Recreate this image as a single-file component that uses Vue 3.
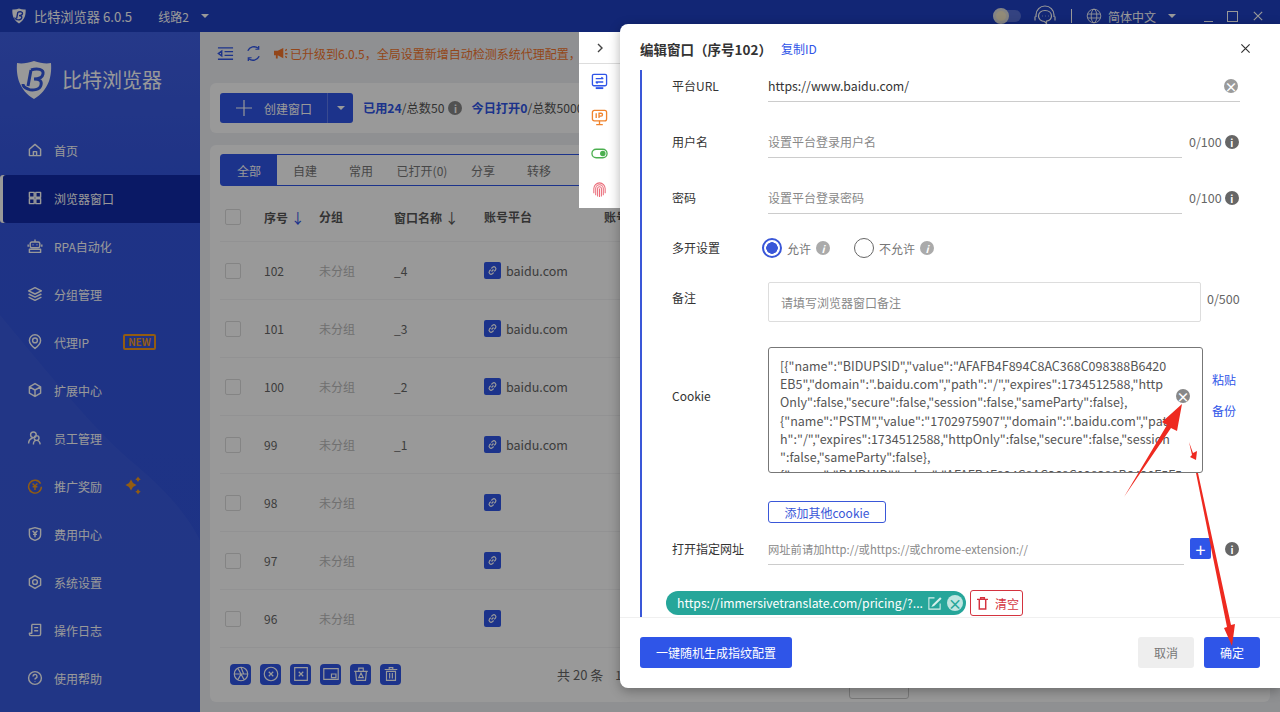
<script setup>
const menu = [
  { label: '首页', icon: 'M3 9l7-6 7 6v8H3zM8 17v-5h4v5' },
  { label: '浏览器窗口', active: true, icon: 'M3 3h6v6H3zM11 3h6v6h-6zM3 11h6v6H3zM11 11h6v6h-6z' },
  { label: 'RPA自动化', icon: 'M6 5h8a2 2 0 0 1 2 2v3a2 2 0 0 1-2 2H6a2 2 0 0 1-2-2V7a2 2 0 0 1 2-2zM10 2v3M7 8.500h1M12 8.500h1M1.500 8v3M18.500 8v3M3 14h14v4H3z' },
  { label: '分组管理', icon: 'M10 2l8 4-8 4-8-4zM2 10l8 4 8-4M2 14l8 4 8-4' },
  { label: '代理IP', icon: 'M10 18s-7-5.500-7-10a7 7 0 0 1 14 0c0 4.500-7 10-7 10zM10 5a3 3 0 1 0 0 6 3 3 0 0 0 0-6z', tag: 'new' },
  { label: '扩展中心', icon: 'M10 2l7 4v8l-7 4-7-4V6zM3 6l7 4 7-4M10 10v8' },
  { label: '员工管理', icon: 'M8 2.500a3.500 3.500 0 1 0 0 7 3.500 3.500 0 0 0 0-7zM2 17c0-4 2-6 5-7M12 7a3 3 0 1 1 0 6 3 3 0 0 1 0-6zM8 18c0-3 1.500-5 4-5s4 2 4.500 5' },
  { label: '推广奖励', icon: 'M17 7a8 8 0 1 0 1 4M7 7l3 3 3-3M10 10v5M7 11h6', orange: true, tag: 'star' },
  { label: '费用中心', icon: 'M10 2l7 2v7c0 4-3 6-7 7-4-1-7-3-7-7V4zM7 6l3 3 3-3M10 9v5M7.500 10.500h5' },
  { label: '系统设置', icon: 'M10 2l7 4v8l-7 4-7-4V6zM10 7a3 3 0 1 0 0 6 3 3 0 0 0 0-6z' },
  { label: '操作日志', icon: 'M6 3h11v12a2 2 0 0 1-2 2H4M6 3v11H3v1a2 2 0 0 0 2 2M9 7h5M9 11h5' },
  { label: '使用帮助', icon: 'M10 2a8 8 0 1 0 0 16 8 8 0 0 0 0-16zM7.500 8a2.500 2.500 0 1 1 3.500 2.300c-.7.3-1 .9-1 1.700M10 14.500v.5' },
]
const tabs = ['全部', '自建', '常用', '已打开(0)', '分享', '转移']
const rows = [
  { id: 102, name: '_4', site: 'baidu.com' },
  { id: 101, name: '_3', site: 'baidu.com' },
  { id: 100, name: '_2', site: 'baidu.com' },
  { id: 99, name: '_1', site: 'baidu.com' },
  { id: 98, name: '', site: '' },
  { id: 97, name: '', site: '' },
  { id: 96, name: '', site: '' },
]
const tools = [
  'M10 2.500a7.500 7.500 0 1 0 0 15 7.500 7.500 0 0 0 0-15zM10 2.500l3 7.500M17.500 10H10M13.500 16.500L10 10M6.500 16.500L10 10M2.500 10H10M6.500 3.500L10 10',
  'M10 2.500a7.500 7.500 0 1 0 0 15 7.500 7.500 0 0 0 0-15zM7.500 7.500l5 5M12.500 7.500l-5 5',
  'M3 3h14v14H3zM7.500 7.500l5 5M12.500 7.500l-5 5',
  'M2 4h16v12H2zM10.500 10h5v4h-5z',
  'M4 7h12l-1 10H5zM2.500 7h15M7.500 7V3.500h5V7M10 9l2.500 5h-5z',
  'M5 7h10v10H5zM3 5h14M8 5V3h4v2M8.500 9v6M11.500 9v6',
]
const cookieLines = [
  '[{"name":"BIDUPSID","value":"AFAFB4F894C8AC368C098388B6420',
  'EB5","domain":".baidu.com","path":"/","expires":1734512588,"http',
  'Only":false,"secure":false,"session":false,"sameParty":false},',
  '{"name":"PSTM","value":"1702975907","domain":".baidu.com","pat',
  'h":"/","expires":1734512588,"httpOnly":false,"secure":false,"session',
  '":false,"sameParty":false},',
  '{"name":"BAIDUID","value":"AFAFB4F894C8AC368C098388B6420F5F5',
]
</script>

<template>
  <div class="app">
    <header class="titlebar">
      <svg class="title-logo" viewBox="0 0 36 40">
        <path d="M18 1c6 2 12 3 17 2 1 13-2 27-17 36C3 30 0 16 1 3c5 1 11 0 17-2z" fill="#fff" />
        <path d="M15 10l-3 16M15 10c6-2 13-1 12 4-.5 3-4 5-9 5 6 0 8 2 7 6-1 5-9 6-13 4-3-1-5-3-5-5" fill="none" stroke="#2242c8" stroke-width="3.500" />
      </svg>
      <span class="title-name">比特浏览器 6.0.5</span>
      <span class="title-line">线路2</span>
      <i class="caret" />
      <div class="title-right">
        <div class="theme-toggle"><span class="theme-knob" /></div>
        <svg class="title-icon headset" viewBox="0 0 24 24" fill="none" stroke="currentColor" stroke-width="1.200">
          <path d="M3 13V11a9 9 0 0 1 18 0v2M2 12.500v4M22 12.500v4" />
          <path d="M12 6.500c-4 0-6.500 2.500-6.500 5.500 0 3 2.500 5.500 6 5.500l2 2v-2.300c3-.7 5-2.700 5-5.200 0-3-2.500-5.500-6.500-5.500z" />
          <path d="M9 12h.5M12 12h.5M15 12h.5" />
        </svg>
        <span class="title-sep" />
        <svg class="title-icon globe" viewBox="0 0 20 20" fill="none" stroke="currentColor" stroke-width="1.100">
          <circle cx="10" cy="10" r="8.500" />
          <ellipse cx="10" cy="10" rx="3.500" ry="8.500" />
          <path d="M2 7.500h16M2 12.500h16" />
        </svg>
        <span class="title-lang">简体中文</span>
        <i class="caret lang-caret" />
        <span class="win-min" />
        <span class="win-max" />
        <svg class="win-close" viewBox="0 0 12 12" stroke="currentColor" stroke-width="1.400"><path d="M1 1l10 10M11 1L1 11" /></svg>
      </div>
    </header>

    <div class="body">
      <aside class="sidebar">
        <svg class="side-wave" viewBox="0 0 200 680" preserveAspectRatio="none">
          <path d="M0 283c50 60 90 110 130 145 30 25 55 50 70 80V680H0z" fill="#fff" opacity=".035" />
        </svg>
        <div class="brand">
          <svg class="brand-logo" viewBox="0 0 36 40">
            <path d="M18 1c6 2 12 3 17 2 1 13-2 27-17 36C3 30 0 16 1 3c5 1 11 0 17-2z" fill="#fff" />
            <path d="M15 10l-3 16M15 10c6-2 13-1 12 4-.5 3-4 5-9 5 6 0 8 2 7 6-1 5-9 6-13 4-3-1-5-3-5-5" fill="none" stroke="#3357e0" stroke-width="3" />
          </svg>
          <span class="brand-name">比特浏览器</span>
        </div>
        <nav class="menu">
          <div v-for="item in menu" :key="item.label" class="menu-item" :class="{ active: item.active }">
            <svg class="menu-icon" :class="{ orange: item.orange }" viewBox="0 0 20 20" fill="none" stroke="currentColor" stroke-width="1.800" stroke-linejoin="round">
              <path :d="item.icon" />
            </svg>
            <span>{{ item.label }}</span>
            <span v-if="item.tag === 'new'" class="tag-new">NEW</span>
            <svg v-if="item.tag === 'star'" class="tag-star" viewBox="0 0 20 20" fill="#f59a1d">
              <path d="M8 3.500L10 7l3.500 2-3.500 2-2 3.500L6 11 2.500 9 6 7z" />
              <path d="M15 .500l1 1.700 1.700 1-1.700 1-1 1.700-1-1.700-1.700-1 1.700-1zM15 13l1 1.700 1.700 1-1.700 1-1 1.700-1-1.700-1.700-1 1.700-1z" />
            </svg>
          </div>
        </nav>
      </aside>

      <main class="main">
        <div class="notice">
          <svg class="notice-icon" viewBox="0 0 18 18" fill="none" stroke="#2f55e8" stroke-width="1.500">
            <path d="M1 3h16M8 7h9M8 11h9M1 15h16M5 6.500L1.500 9 5 11.500z" />
          </svg>
          <svg class="notice-icon refresh" viewBox="0 0 18 18" fill="none" stroke="#2f55e8" stroke-width="1.500">
            <path d="M3 6a7 7 0 0 1 11-2.500M15 12a7 7 0 0 1-11 2.500" />
            <path d="M14.500 1v3.500H11M3.500 17v-3.500H7" stroke-width="1.300" />
          </svg>
          <svg class="horn" viewBox="0 0 16 14" fill="#f5762c">
            <path d="M1 4h4l6-3v11L5 9v3.500H3V9H1zM13 3l2-1v1.500l-2 1zM13 6.500h2.500V8H13zM13 9.500l2 1V12l-2-1z" />
          </svg>
          <span class="notice-text">已升级到6.0.5，全局设置新增自动检测系统代理配置，</span>
        </div>

        <section class="card toolbar">
          <div class="create-btn">
            <svg class="plus" viewBox="0 0 16 16" stroke="currentColor" stroke-width="1.200"><path d="M8 0v16M0 8h16" /></svg>
            <span class="create-text">创建窗口</span>
            <span class="create-caret"><i class="caret" /></span>
          </div>
          <span class="quota"><b>已用24</b>/总数50</span>
          <span class="info-dot">i</span>
          <span class="quota today"><b>今日打开0</b>/总数5000</span>
        </section>

        <section class="card list">
          <div class="tabs">
            <span v-for="(tab, i) in tabs" :key="tab" class="tab" :class="{ on: i === 0 }">{{ tab }}</span>
          </div>
          <div class="row head">
            <span class="check" />
            <span>序号 <em class="arrow blue">↓</em></span>
            <span>分组</span>
            <span>窗口名称 <em class="arrow">↓</em></span>
            <span>账号平台</span>
            <span>账号</span>
          </div>
          <div v-for="r in rows" :key="r.id" class="row">
            <span class="check" />
            <span>{{ r.id }}</span>
            <span class="muted">未分组</span>
            <span>{{ r.name }}</span>
            <span class="site">
              <svg class="link-ico" viewBox="0 0 17 17">
                <rect width="17" height="17" rx="2" fill="#2f55e8" />
                <path d="M7.500 9.500l2-2M6.800 7.700l-1.300 1.300a2 2 0 0 0 2.800 2.800l1.300-1.300M10.200 9.300l1.300-1.300a2 2 0 0 0-2.800-2.800L7.400 6.500" fill="none" stroke="#fff" stroke-width="1.200" />
              </svg>
              {{ r.site }}
            </span>
            <span />
          </div>
          <div class="list-foot">
            <span v-for="(d, i) in tools" :key="i" class="tool">
              <svg viewBox="0 0 20 20" fill="none" stroke="#fff" stroke-width="1.300"><path :d="d" /></svg>
            </span>
            <span class="total">共 20 条</span>
            <span class="page-no">1</span>
            <span class="page-size" />
          </div>
        </section>
      </main>
    </div>

    <div class="mask" />

    <div class="side-panel">
      <div class="panel-top">
        <svg viewBox="0 0 10 10" fill="none" stroke="#444" stroke-width="1.400"><path d="M3 1l4 4-4 4" /></svg>
      </div>
      <svg class="panel-ico" viewBox="0 0 18 18" fill="none" stroke="#2f55e8" stroke-width="1.400">
        <rect x="1.500" y="1.500" width="15" height="12" rx="1.500" />
        <path d="M5 6h8M11 4.500L13 6M13 9.500H5M7 11L5 9.500" />
        <path d="M5 16h8" stroke-width="2" />
      </svg>
      <svg class="panel-ico" viewBox="0 0 18 18" fill="none" stroke="#f0832c" stroke-width="1.400">
        <rect x="1.500" y="1.500" width="15" height="11" rx="2" />
        <path d="M5.500 4.500v5M8.500 9.500v-5h2.200a1.500 1.500 0 0 1 0 3H8.500M9 12.500V16M5.500 16.500h7" />
      </svg>
      <svg class="panel-ico" viewBox="0 0 18 18" fill="none" stroke="#4caf50" stroke-width="1.400">
        <rect x="1" y="4.500" width="16" height="9" rx="4.500" />
        <circle cx="12.500" cy="9" r="2.200" fill="#4caf50" />
      </svg>
      <svg class="panel-ico" viewBox="0 0 18 18" fill="none" stroke="#ea6b78" stroke-width="1.100">
        <path d="M3 13V8a6 6 0 0 1 12 0v5M5 15V8a4 4 0 0 1 8 0v7M7 16.500V8a2 2 0 0 1 4 0v8.500M9 8v9" />
      </svg>
    </div>

    <div class="modal">
      <div class="modal-head">
        <span class="modal-title">编辑窗口（序号102）</span>
        <span class="copy-id">复制ID</span>
        <svg class="modal-close" viewBox="0 0 12 12" stroke="#333" stroke-width="1.300"><path d="M1.500 1.500l9 9M10.500 1.500l-9 9" /></svg>
      </div>

      <div class="modal-body">
        <div class="form-row url-row">
          <label>平台URL</label>
          <div class="line-input wide">
            <span class="value">https://www.baidu.com/</span>
            <span class="clear-dot">×</span>
          </div>
        </div>
        <div class="form-row gap-24">
          <label>用户名</label>
          <div class="line-input"><span class="holder">设置平台登录用户名</span></div>
          <span class="count">0/100</span>
          <span class="info-dark">i</span>
        </div>
        <div class="form-row gap-24">
          <label>密码</label>
          <div class="line-input"><span class="holder">设置平台登录密码</span></div>
          <span class="count">0/100</span>
          <span class="info-dark">i</span>
        </div>
        <div class="form-row gap-18">
          <label>多开设置</label>
          <div class="radios">
            <span class="radio on" /><span class="radio-text">允许</span><span class="info-gray">i</span>
            <span class="radio off" /><span class="radio-text">不允许</span><span class="info-gray">i</span>
          </div>
        </div>
        <div class="form-row note-row">
          <label>备注</label>
          <div class="note-box">请填写浏览器窗口备注</div>
          <span class="count note-count">0/500</span>
        </div>
        <div class="form-row cookie-row">
          <label>Cookie</label>
          <div class="cookie-box">
            <div v-for="line in cookieLines" :key="line" class="cookie-line">{{ line }}</div>
            <span class="clear-dot cookie-clear">×</span>
          </div>
          <div class="cookie-actions">
            <span>粘贴</span>
            <span>备份</span>
          </div>
        </div>
        <div class="add-row"><span class="add-cookie">添加其他cookie</span></div>
        <div class="form-row open-row">
          <label>打开指定网址</label>
          <div class="line-input open-input"><span class="holder open-holder">网址前请加http://或https://或chrome-extension://</span></div>
          <span class="plus-btn">+</span>
          <span class="info-dark open-info">i</span>
        </div>
        <div class="chip-row">
          <div class="chip">
            <span class="chip-text">https://immersivetranslate.com/pricing/?...</span>
            <svg class="chip-edit" viewBox="0 0 16 16" fill="none" stroke="#d7f0ec" stroke-width="1.100">
              <path d="M8 2H2v12h12V8M6.500 9.500L14 2l.8.800-7.500 7.500-1.500.5z" />
            </svg>
            <span class="chip-close">×</span>
          </div>
          <div class="clear-btn">
            <svg viewBox="0 0 12 14" fill="none" stroke="#d4333f" stroke-width="1.600"><path d="M0 2.500h12M4 2V.8h4V2M2.500 3v10h7V3" /></svg>
            清空
          </div>
        </div>
      </div>

      <div class="modal-foot">
        <span class="btn primary">一键随机生成指纹配置</span>
        <span class="foot-gap" />
        <span class="btn cancel">取消</span>
        <span class="btn primary ok">确定</span>
      </div>
    </div>

    <svg class="marks" viewBox="0 0 1280 712">
      <polygon points="1124,497 1167,425 1162,422 1182,404 1177,431 1171,428" fill="#ee2a20" />
      <polygon points="1189,442 1193,453 1197,451 1196,460 1190,457 1192,455" fill="#ee2a20" />
      <polygon points="1196,473 1198,473 1231,625 1235,624 1232,646 1224,628 1227,627" fill="#ee2a20" />
    </svg>
  </div>
</template>

<style scoped>
.app {
  position: relative;
  width: 1280px;
  height: 712px;
  overflow: hidden;
  font-family: "Noto Sans CJK SC", "Noto Sans", sans-serif;
  font-size: 12px;
  color: #333;
}

.titlebar {
  display: flex;
  align-items: center;
  height: 32px;
  padding-left: 12px;
  background: #1f40c4;
  color: #fff;
}
.title-logo { width: 14px; height: 16px; }
.title-name { margin-left: 8px; font-size: 13.200px; }
.title-line { margin-left: 26px; font-size: 12px; }
.caret {
  display: inline-block;
  width: 0;
  height: 0;
  border-left: 4px solid transparent;
  border-right: 4px solid transparent;
  border-top: 4px solid currentColor;
}
.title-line + .caret { margin-left: 12px; }
.title-right { display: flex; align-items: center; margin-left: auto; }
.theme-toggle { width: 28px; height: 12px; border-radius: 6px; background: #5770d8; display: flex; align-items: center; }
.theme-knob { width: 16px; height: 16px; border-radius: 50%; background: #f4e8c8; border: 3px solid #ddd; box-sizing: border-box; flex: none; }
.title-icon { width: 24px; height: 24px; }
.headset { margin-left: 12px; }
.title-sep { width: 1px; height: 14px; background: #fff; margin: 0 14px 0 14px; }
.globe { width: 16px; height: 16px; }
.title-lang { margin-left: 6px; font-size: 12px; }
.lang-caret { margin-left: 12px; }
.win-min { width: 9px; height: 1px; background: #fff; margin: 10px 0 0 28px; }
.win-max { width: 9px; height: 9px; border: 1.500px solid #fff; margin-left: 14px; }
.win-close { width: 10px; height: 10px; margin: 0 17px 0 15px; }

.body { display: flex; height: 680px; }

.sidebar {
  position: relative;
  width: 200px;
  flex: none;
  background: linear-gradient(180deg, #3f5fe4 0, #3456df 22%, #3054de 100%);
  color: #fff;
}
.side-wave { position: absolute; inset: 0; width: 100%; height: 100%; }
.brand { position: relative; display: flex; align-items: center; height: 95px; padding: 0 0 1px 16px; box-sizing: border-box; }
.brand-logo { width: 36px; height: 40px; margin-top: 2px; }
.brand-name { margin-left: 10px; font-size: 20px; }
.menu { position: relative; }
.menu-item { display: flex; align-items: center; height: 48px; padding: 0 0 2px 27px; box-sizing: border-box; font-size: 12px; }
.menu-item.active {
  background: #112aa8;
  box-shadow: inset 3px 0 0 #fff;
  border-radius: 3px 0 0 3px;
}
.menu-icon { width: 16px; height: 16px; margin-right: 11px; flex: none; }
.menu-icon.orange { color: #f59a1d; }
.tag-new {
  margin-left: 34px;
  padding: 0 3px;
  border: 2px solid #f59a1d;
  border-radius: 2px;
  color: #f59a1d;
  font-size: 10px;
  font-weight: 700;
  line-height: 12px;
}
.tag-star { width: 20px; height: 20px; margin-left: 21px; }

.main { flex: 1; background: #eef0f4; min-width: 0; padding: 0 10px; }
.notice { display: flex; align-items: center; height: 43px; padding: 0 7px; white-space: nowrap; overflow: hidden; }
.notice-icon { width: 17px; height: 17px; flex: none; }
.refresh { margin-left: 11px; }
.horn { width: 15px; height: 13px; margin-left: 11px; flex: none; }
.notice-text { margin-left: 2px; font-size: 12px; color: #f5762c; }

.card { background: #fff; border-radius: 6px; }
.toolbar { display: flex; align-items: center; height: 50px; margin-top: 8px; padding-left: 10px; }
.create-btn {
  position: relative;
  display: flex;
  align-items: center;
  width: 133px;
  height: 30px;
  padding-left: 16px;
  box-sizing: border-box;
  border-radius: 3px;
  background: #2f55e8;
  color: #fff;
}
.plus { width: 16px; height: 16px; }
.create-text { margin-left: 12px; font-size: 12px; }
.create-caret {
  position: absolute;
  right: 0;
  top: 0;
  width: 25px;
  height: 30px;
  border-left: 1px solid #5f7cf0;
  display: flex;
  align-items: center;
  justify-content: center;
}
.quota { margin-left: 10px; font-size: 12.200px; color: #555; white-space: nowrap; }
.quota b { color: #2f55e8; }
.today { margin-left: 9px; }
.info-dot, .info-dark, .info-gray {
  display: inline-flex;
  align-items: center;
  justify-content: center;
  width: 14px;
  height: 14px;
  border-radius: 50%;
  background: #666;
  color: #fff;
  font-size: 10px;
  font-weight: 700;
  flex: none;
}
.info-dot { margin-left: 4px; background: #888; }

.list { height: 557px; margin-top: 12px; padding: 9px 10px 0; box-sizing: border-box; }
.tabs { display: flex; height: 32px; width: 760px; border: 1px solid #2f55e8; border-radius: 3px; box-sizing: border-box; }
.tab { display: flex; align-items: center; justify-content: center; width: 56px; color: #777; }
.tab:nth-child(4) { width: 66px; }
.tab.on { background: #2f55e8; color: #fff; }
.row {
  display: grid;
  grid-template-columns: 39px 55px 75px 90px 120px 1fr;
  align-items: center;
  height: 58px;
  padding-left: 5px;
  border-bottom: 1px solid #f4f4f6;
  box-sizing: border-box;
  color: #666;
}
.row.head { height: 56px; padding-top: 6px; font-weight: 700; color: #555; background: none; }
.arrow { font-style: normal; font-size: 14px; font-weight: 400; }
.arrow.blue { color: #2f55e8; }
.check { width: 16px; height: 16px; border: 1px solid #ddd; border-radius: 2px; background: #fff; box-sizing: border-box; }
.muted { color: #bbb; }
.site { display: flex; align-items: center; gap: 5px; font-size: 12.500px; white-space: nowrap; }
.link-ico { width: 17px; height: 17px; }
.list-foot { display: flex; align-items: center; height: 52px; padding-left: 10px; gap: 9px; }
.tool { display: flex; align-items: center; justify-content: center; width: 21px; height: 21px; border-radius: 4px; background: #2f55e8; }
.tool svg { width: 18px; height: 18px; }
.total { margin-left: 147px; color: #666; font-size: 13px; white-space: nowrap; }
.page-no { margin-left: 3px; color: #666; }
.page-size { width: 58px; height: 26px; margin: 21px 0 0 218px; border: 1px solid #ccc; border-radius: 3px; flex: none; }

.mask { position: absolute; inset: 0; background: rgba(0, 0, 0, 0.4); }

.side-panel {
  position: absolute;
  left: 579px;
  top: 32px;
  width: 41px;
  height: 176px;
  background: #fff;
  display: flex;
  flex-direction: column;
  align-items: center;
}
.panel-top { width: 100%; height: 31px; border-bottom: 1px solid #ddd; display: flex; align-items: center; justify-content: center; flex: none; }
.panel-top svg { width: 10px; height: 10px; }
.panel-ico { width: 17px; height: 17px; margin-top: 19px; flex: none; }
.panel-top + .panel-ico { margin-top: 9px; }

.modal {
  position: absolute;
  left: 620px;
  top: 24px;
  width: 660px;
  height: 664px;
  background: #fff;
  border-radius: 8px 0 0 8px;
  box-shadow: 0 3px 12px rgba(0, 0, 0, 0.3);
  display: flex;
  flex-direction: column;
  overflow: hidden;
}
.modal-head { display: flex; align-items: center; height: 46px; padding: 3px 29px 0 20px; box-sizing: border-box; flex: none; }
.modal-title { font-size: 13.500px; font-weight: 700; color: #333; }
.copy-id { margin-left: 9px; color: #2f55e8; font-size: 12px; }
.modal-close { width: 11px; height: 11px; margin-left: auto; }
.modal-body { flex: 1; margin-left: 20px; padding-right: 40px; border-left: 2px solid #3a57d8; min-height: 0; overflow: hidden; }

.form-row { display: flex; align-items: center; height: 32px; padding-left: 30px; }
.form-row label { width: 96px; flex: none; padding-bottom: 2px; color: #333; font-size: 12px; }
.gap-24 { margin-top: 24px; }
.gap-18 { margin-top: 18px; }
.line-input {
  position: relative;
  display: flex;
  align-items: center;
  width: 414px;
  height: 32px;
  border-bottom: 1px solid #ccc;
  box-sizing: border-box;
  flex: none;
}
.line-input.wide { width: 472px; }
.value { font-size: 12.300px; color: #333; }
.holder { color: #888; font-size: 12px; }
.open-holder { font-size: 11.300px; }
.count { margin-left: 7px; padding-bottom: 2px; color: #666; font-size: 12.500px; white-space: nowrap; }
.info-dark { margin-left: 3px; }
.clear-dot {
  position: absolute;
  right: 2px;
  top: 9px;
  width: 14px;
  height: 14px;
  border-radius: 50%;
  background: #9a9a9a;
  color: #fff;
  display: flex;
  align-items: center;
  justify-content: center;
  font-size: 13px;
  font-weight: 700;
  line-height: 1;
}
.radios { display: flex; align-items: center; margin-left: -6px; }
.radio { width: 20px; height: 20px; border-radius: 50%; box-sizing: border-box; flex: none; }
.radio.on { border: 2px solid #3a57d8; background: radial-gradient(circle, #3a57d8 0 5.500px, #fff 6px); }
.radio.off { border: 1.500px solid #666; margin-left: 24px; }
.radio-text { margin: 0 5px; color: #777; font-size: 12px; }
.info-gray { background: #aaa; font-style: italic; }

.note-row { height: 40px; margin-top: 18px; align-items: flex-start; }
.note-row label { margin-top: 7px; }
.note-box {
  width: 433px;
  height: 40px;
  flex: none;
  border: 1px solid #ddd;
  border-radius: 2px;
  box-sizing: border-box;
  padding: 0 12px;
  display: flex;
  align-items: center;
  color: #888;
}
.note-count { margin-top: 7px; margin-left: 6px; }

.cookie-row { height: 126px; margin-top: 25px; }
.cookie-row label { margin-top: -28px; }
.cookie-box {
  position: relative;
  width: 435px;
  height: 126px;
  flex: none;
  padding: 9px 0 0 11px;
  border: 1px solid #777;
  border-radius: 3px;
  box-sizing: border-box;
  overflow: hidden;
  color: #555;
}
.cookie-line { height: 18.200px; line-height: 18.200px; font-size: 12.500px; white-space: nowrap; }
.cookie-clear { right: 12px; top: 41px; background: #888; }
.cookie-actions { display: flex; flex-direction: column; gap: 14px; margin: -30px 0 0 9px; color: #2f55e8; font-size: 12px; line-height: 17px; }

.add-row { margin-top: 28px; padding-left: 126px; height: 22px; }
.add-cookie {
  display: flex;
  align-items: center;
  justify-content: center;
  width: 118px;
  height: 22px;
  border: 1px solid #3a57d8;
  border-radius: 3px;
  box-sizing: border-box;
  color: #3a57d8;
}
.open-row { margin-top: 10px; }
.line-input.open-input { width: 416px; }
.plus-btn {
  width: 21px;
  height: 21px;
  margin: -1px 0 0 6px;
  border-radius: 2px;
  background: #2f55e8;
  color: #fff;
  display: flex;
  align-items: center;
  justify-content: center;
  font-size: 18px;
  line-height: 1;
  flex: none;
}
.open-info { margin-left: 14px; }

.chip-row { display: flex; align-items: center; gap: 4px; margin-top: 25px; padding-left: 24px; }
.chip { display: flex; align-items: center; width: 300px; height: 24px; padding-left: 11px; box-sizing: border-box; border-radius: 12px; background: #26a69a; color: #fff; flex: none; }
.chip-text { font-size: 12.200px; white-space: nowrap; }
.chip-edit { width: 15px; height: 15px; margin-left: auto; }
.chip-close {
  width: 16px;
  height: 16px;
  margin: 0 3px 0 5px;
  border-radius: 50%;
  background: #bfe6e1;
  color: #26a69a;
  display: flex;
  align-items: center;
  justify-content: center;
  font-size: 14px;
  font-weight: 700;
  line-height: 1;
}
.clear-btn {
  display: flex;
  align-items: center;
  gap: 7px;
  width: 53px;
  height: 26px;
  padding-left: 6px;
  border: 1px solid #d4333f;
  border-radius: 3px;
  box-sizing: border-box;
  color: #d4333f;
  white-space: nowrap;
  flex: none;
}
.clear-btn svg { width: 11px; height: 13px; }

.modal-foot {
  display: flex;
  align-items: center;
  height: 71px;
  padding: 0 20px 1px;
  box-sizing: border-box;
  flex: none;
  border-top: 1px solid #f0f0f0;
}
.foot-gap { flex: 1; }
.btn { display: flex; align-items: center; justify-content: center; height: 31px; border-radius: 3px; font-size: 12px; }
.btn.primary { width: 152px; background: #2f55e8; color: #fff; }
.btn.cancel { width: 56px; background: #eee; color: #777; }
.btn.ok { width: 56px; margin-left: 10px; }

.marks { position: absolute; inset: 0; width: 1280px; height: 712px; pointer-events: none; }
</style>
